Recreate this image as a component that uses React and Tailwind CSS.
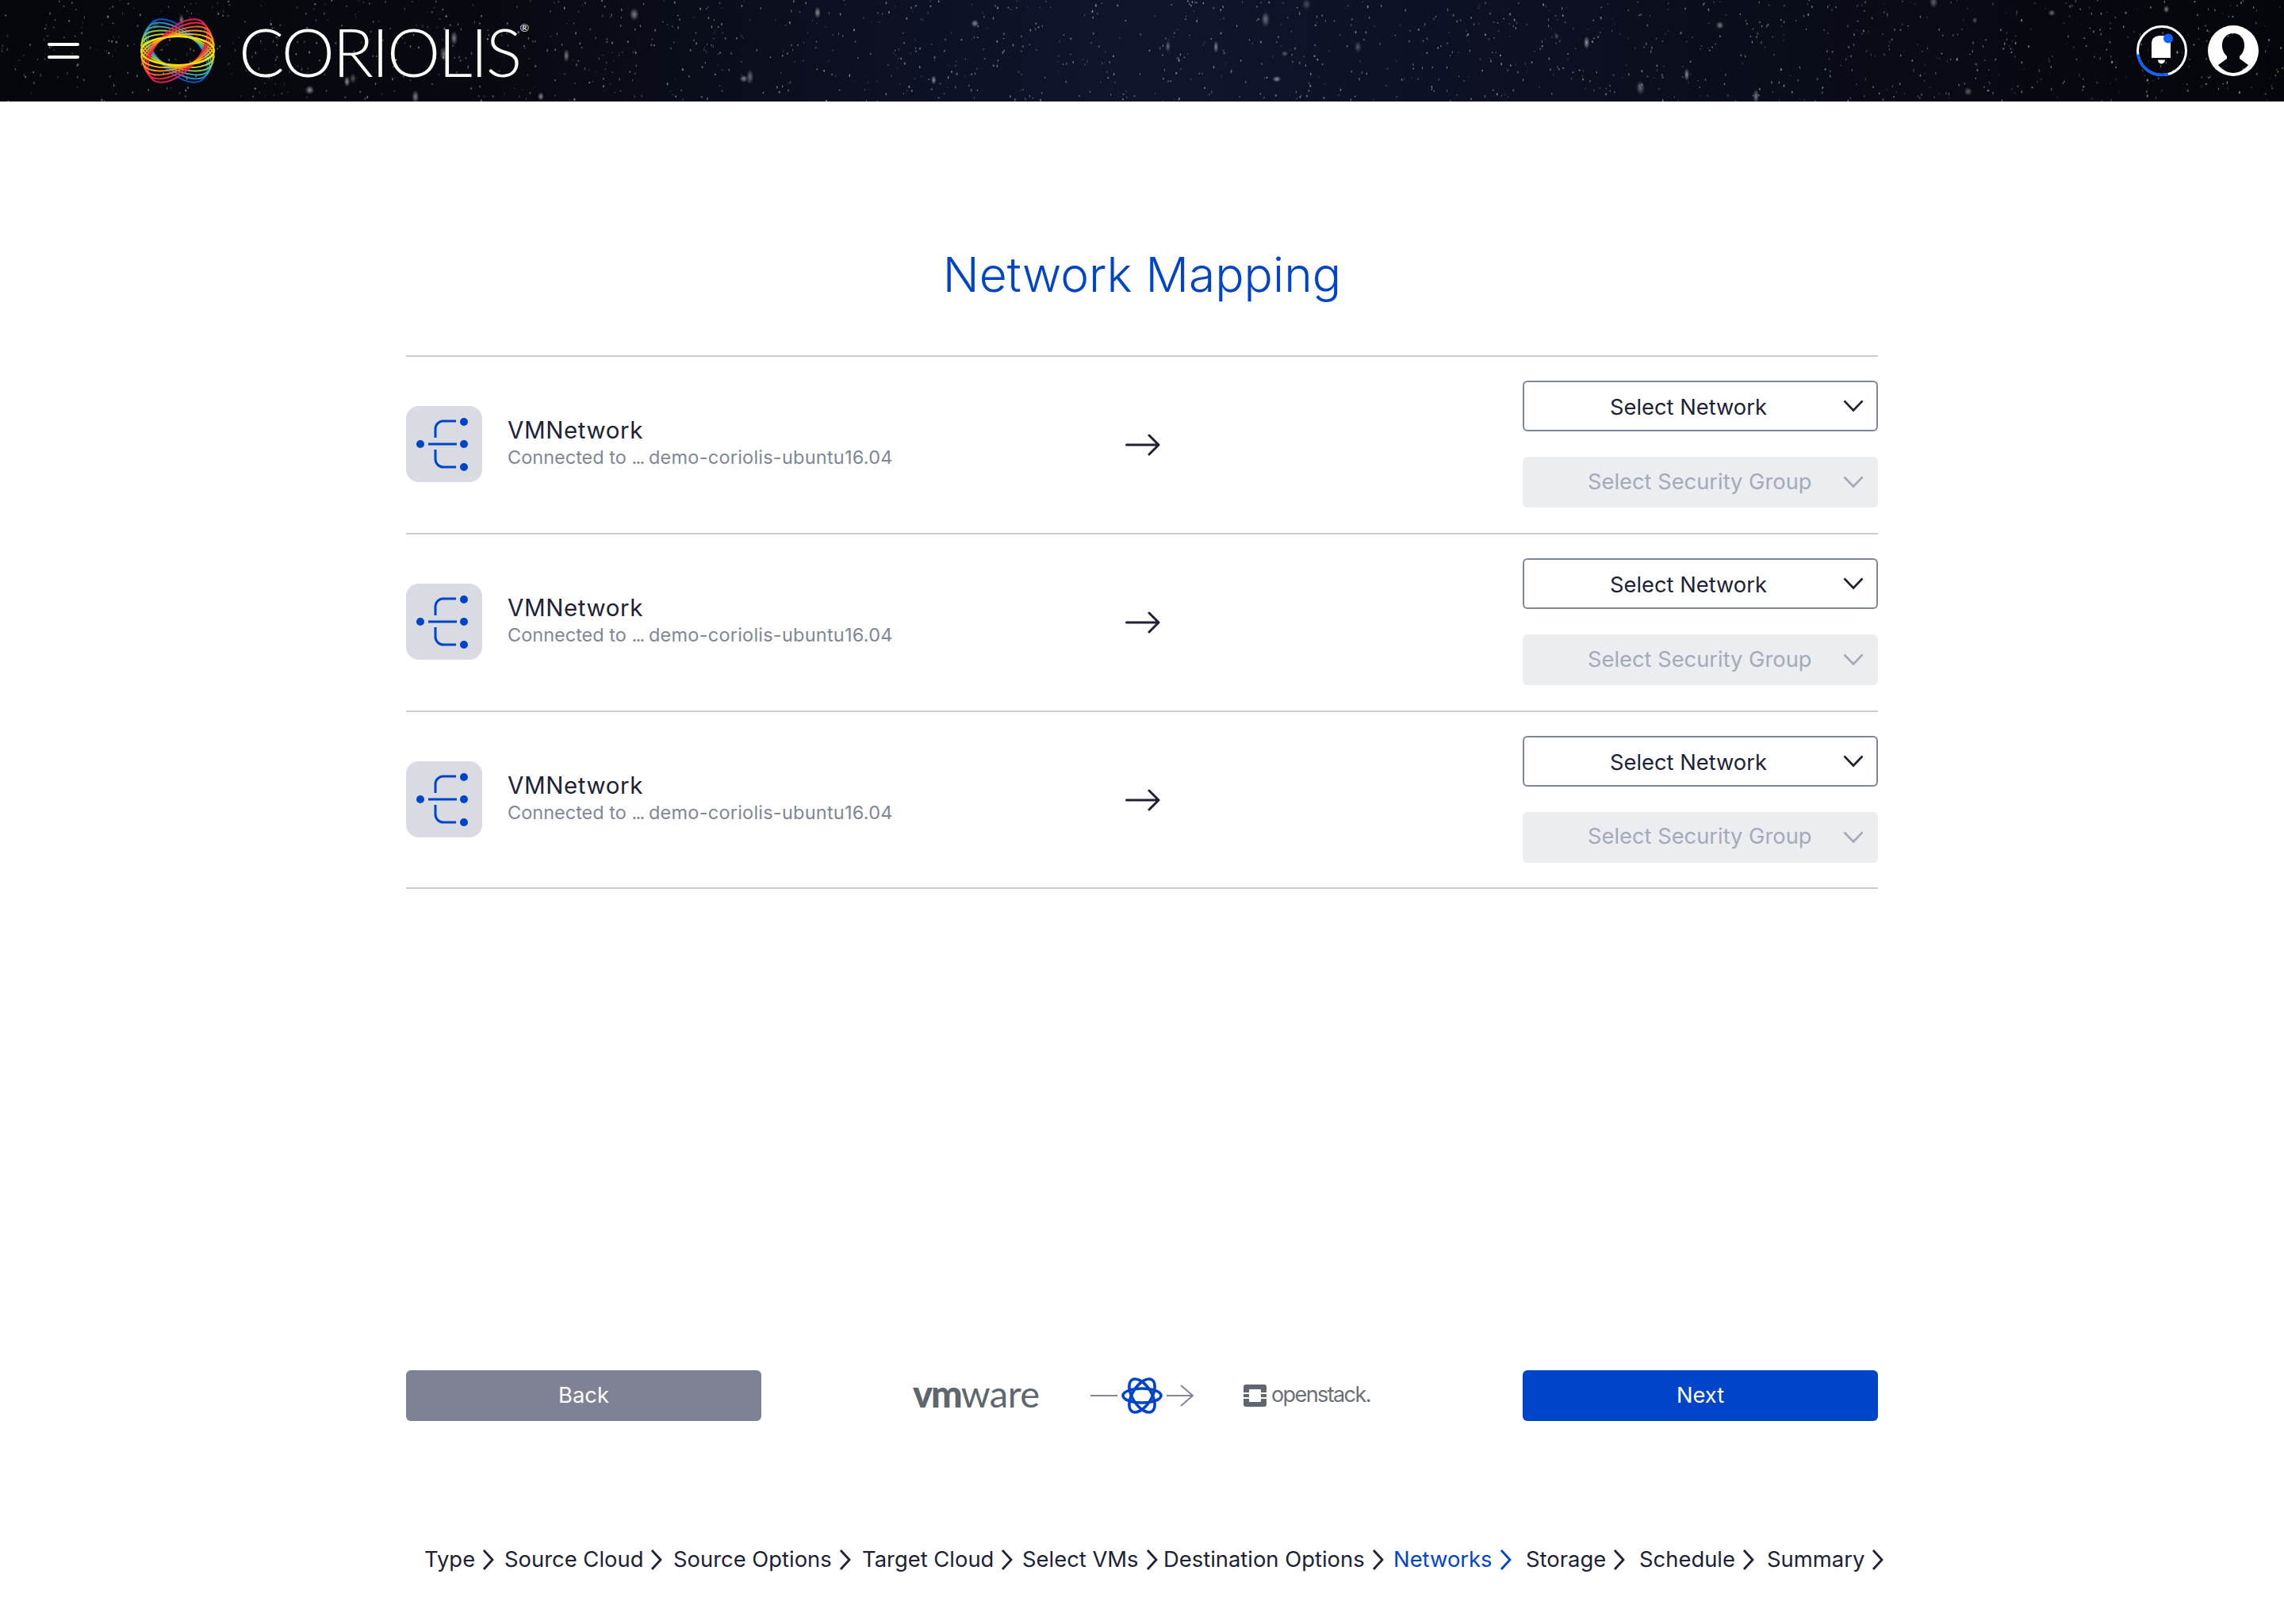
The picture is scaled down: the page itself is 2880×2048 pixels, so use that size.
import React from "react";

const FONT = "font-['Inter','Noto_Sans',sans-serif]";

function mulberry(seed) {
  let a = seed;
  return () => {
    a |= 0; a = (a + 0x6d2b79f5) | 0;
    let t = Math.imul(a ^ (a >>> 15), 1 | a);
    t = (t + Math.imul(t ^ (t >>> 7), 61 | t)) ^ t;
    return ((t ^ (t >>> 14)) >>> 0) / 4294967296;
  };
}
const rnd = mulberry(77);
const STARS = Array.from({ length: 1500 }, () => ({
  x: rnd() * 2880,
  y: rnd() * 128,
  rx: 0.5 + rnd() * 0.6,
  ry: 0.8 + rnd() * 1.1,
  o: 0.1 + rnd() * 0.4,
}));
const GLOWS = Array.from({ length: 34 }, () => ({
  x: rnd() * 2880,
  y: rnd() * 128,
  rx: 3 + rnd() * 3,
  ry: 4 + rnd() * 6,
  o: 0.3 + rnd() * 0.4,
}));

function Starfield() {
  return (
    <svg className="absolute inset-0 h-full w-full" viewBox="0 0 2880 128" preserveAspectRatio="none">
      <defs>
        <linearGradient id="sky" x1="0" x2="1" y1="0" y2="0">
          <stop offset="0" stopColor="#06070b" />
          <stop offset="0.22" stopColor="#080a12" />
          <stop offset="0.5" stopColor="#10152e" />
          <stop offset="0.78" stopColor="#0a0d1a" />
          <stop offset="1" stopColor="#05060a" />
        </linearGradient>
        <radialGradient id="glow">
          <stop offset="0" stopColor="#ffffff" stopOpacity="0.8" />
          <stop offset="1" stopColor="#ffffff" stopOpacity="0" />
        </radialGradient>
      </defs>
      <rect width="2880" height="128" fill="url(#sky)" />
      {STARS.map((s, i) => (
        <ellipse key={i} cx={s.x} cy={s.y} rx={s.rx} ry={s.ry} fill="#ffffff" opacity={s.o} />
      ))}
      {GLOWS.map((s, i) => (
        <ellipse key={i} cx={s.x} cy={s.y} rx={s.rx} ry={s.ry} fill="url(#glow)" opacity={s.o} />
      ))}
    </svg>
  );
}

const BLUES = ["#0b55d4", "#2a93c8", "#38b09c", "#8cc84b", "#c9d92e", "#f5dc0a"];
const REDS = ["#f0175f", "#f5253f", "#f7602a", "#f9902a", "#fdb813", "#ffe000"];

function Logo() {
  const sets = [
    { colors: BLUES, sign: 1 },
    { colors: REDS, sign: -1 },
  ];
  return (
    <svg width="100" height="92" viewBox="-50 -46 100 92" className="shrink-0">
      {sets.map((set) =>
        set.colors.map((c, i) => (
          <ellipse
            key={c + set.sign}
            rx={48 - i * 0.4}
            ry={26 - i * 1.6}
            fill="none"
            stroke={c}
            strokeWidth="1.9"
            transform={`rotate(${set.sign * (48 - i * 9.4)})`}
          />
        ))
      )}
    </svg>
  );
}

function Bell() {
  return (
    <svg width="66" height="66" viewBox="0 0 66 66">
      <circle cx="33" cy="33" r="30.5" fill="none" stroke="#fff" strokeWidth="3" />
      <path d="M2.8 37.5 A30.5 30.5 0 0 0 41 62.4" fill="none" stroke="#0f62fe" strokeWidth="3.5" />
      <path d="M20 42 V24 C20 16 26 14 32 14 C38 14 44 16 44 24 V42 Z" fill="#fff" />
      <path d="M28 44.5 H37 A4.5 5 0 0 1 28 44.5 Z" fill="#fff" />
      <circle cx="41" cy="17.5" r="6" fill="#0f62fe" />
    </svg>
  );
}

function User() {
  return (
    <svg width="64" height="64" viewBox="0 0 64 64">
      <path
        fillRule="evenodd"
        fill="#fff"
        d="M32 0 A32 32 0 1 1 32 64 A32 32 0 1 1 32 0 Z M32 10 C24 10 18 16 18 25 C18 31 20 35 24 39 L24 42 L13 50 C18 56 25 60 32 60 C39 60 46 56 51 50 L40 42 L40 39 C44 35 46 31 46 25 C46 16 40 10 32 10 Z"
      />
    </svg>
  );
}

function Chevron({ color }) {
  return (
    <svg width="26" height="16" viewBox="0 0 26 16" className="shrink-0">
      <path d="M1.5 1.5 L13 13.5 L24.5 1.5" fill="none" stroke={color} strokeWidth="2.6" />
    </svg>
  );
}

function NetIcon() {
  return (
    <div className="flex h-[96px] w-[96px] shrink-0 items-center justify-center rounded-2xl bg-[#d8dbe2]">
      <svg width="96" height="96" viewBox="0 0 96 96">
        <g fill="#0044ca">
          <circle cx="18" cy="48" r="5" />
          <circle cx="73" cy="48" r="5" />
          <circle cx="73" cy="20" r="5" />
          <circle cx="73" cy="77" r="5" />
        </g>
        <path
          d="M28 48 H64 M37 40 V29 A10 10 0 0 1 47 19 H63 M37 55 V67 A10 10 0 0 0 47 77 H63"
          fill="none"
          stroke="#0044ca"
          strokeWidth="3"
        />
      </svg>
    </div>
  );
}

function Row({ last }) {
  return (
    <div className={`grid ${last ? "h-[223px]" : "h-[224px]"} grid-cols-[1fr_48px_1fr] items-center border-b-2 border-[#c8ccd7]`}>
      <div className="mb-[2px] flex items-center">
        <NetIcon />
        <div className="mb-[5px] ml-8 flex flex-col">
          <div className="text-[29.5px] leading-[38px] tracking-[0.6px] text-[#202134]">VMNetwork</div>
          <div className="mt-[1px] whitespace-nowrap text-[23.5px] leading-[30px] text-[#7f8795]">
            Connected to <span className="tracking-[-1.8px]">...</span> <span className="tracking-[0.23px]">demo-coriolis-ubuntu16.04</span>
          </div>
        </div>
      </div>
      <svg width="46" height="28" viewBox="0 0 46 28" className="justify-self-center">
        <path d="M3.5 14 H44 M32 2 L44 14 L32 26" fill="none" stroke="#202134" strokeWidth="3" strokeLinecap="round" strokeLinejoin="round" />
      </svg>
      <div className="mb-[2px] flex flex-col items-end gap-8">
        <div className="flex h-[64px] w-[448px] items-center rounded-[6px] border-2 border-[#7f8795] bg-white">
          <span className="ml-[108px] whitespace-nowrap pt-[5px] text-[27.3px] text-[#202134]">Select Network</span>
          <span className="ml-auto mr-[16px] flex"><Chevron color="#202134" /></span>
        </div>
        <div className="flex h-[64px] w-[448px] items-center rounded-[6px] bg-[#ecedf1]">
          <span className="ml-[82px] whitespace-nowrap text-[27.3px] text-[#a4aab8]">Select Security Group</span>
          <span className="ml-auto mr-[18px] flex"><Chevron color="#a4aab8" /></span>
        </div>
      </div>
    </div>
  );
}

const CRUMBS = [
  ["Type", 535],
  ["Source Cloud", 636],
  ["Source Options", 849],
  ["Target Cloud", 1087],
  ["Select VMs", 1289],
  ["Destination Options", 1467],
  ["Networks", 1757],
  ["Storage", 1924],
  ["Schedule", 2067],
  ["Summary", 2228],
];

function Crumb({ label, active, next }) {
  const color = active ? "#0044ca" : "#202134";
  return (
    <div className="flex shrink-0 items-center" style={{ width: next }}>
      <span className="whitespace-nowrap text-[27.4px]" style={{ color }}>{label}</span>
      <svg width="16" height="28" viewBox="0 0 16 28" className="ml-[9px] shrink-0">
        <path d="M2 2 L13 14 L2 26" fill="none" stroke={color} strokeWidth="2.8" />
      </svg>
    </div>
  );
}

function Atom() {
  return (
    <svg width="52" height="48" viewBox="-26 -24 52 48">
      <g fill="none" stroke="#0044ca" strokeWidth="3.6">
        <ellipse rx="24" ry="9" />
        <ellipse rx="23.5" ry="12" transform="rotate(58)" />
        <ellipse rx="23.5" ry="12" transform="rotate(-58)" />
      </g>
    </svg>
  );
}

export default function App() {
  return (
    <div className={`flex h-[2048px] w-[2880px] flex-col bg-white ${FONT}`}>
      <header className="relative flex h-[128px] shrink-0 items-center overflow-hidden pl-[60px] pr-[32px]">
        <Starfield />
        <div className="relative flex flex-col gap-[12px]">
          <div className="h-[4px] w-[40px] rounded-full bg-white" />
          <div className="h-[4px] w-[40px] rounded-full bg-white" />
        </div>
        <div className="relative ml-[74px] flex"><Logo /></div>
        <div className="relative ml-[27px] flex items-start font-['Lato',sans-serif] text-white">
          <span className="text-[85px] font-light leading-[85px] tracking-[-2.6px]">CORIOLIS</span>
          <span className="mt-[6px] text-[14px] leading-none">®</span>
        </div>
        <div className="relative ml-auto flex items-center gap-[25px]">
          <Bell />
          <User />
        </div>
      </header>

      <main className="flex flex-1 flex-col px-[512px]">
        <div className="flex h-[322px] shrink-0 items-end justify-center border-b-2 border-[#c8ccd7] pb-[56px]">
          <h1 className="text-[60.5px] font-light text-[#0044ca]">Network Mapping</h1>
        </div>
        <Row />
        <Row />
        <Row last />

        <div className="mt-[607px] grid h-[64px] shrink-0 grid-cols-[448px_1fr_448px] items-center">
          <div className="flex h-[64px] items-center justify-center rounded-[6px] bg-[#7f8294] text-[27.3px] text-white">Back</div>
          <div className="flex h-full items-center">
            <div className="mb-[5px] ml-[191px] flex w-[162px] items-baseline font-['Lato',sans-serif] text-[#5f6670]">
              <span className="text-[47px] font-black leading-none tracking-[-2px]">vm</span>
              <span className="text-[47px] font-normal leading-none tracking-[-0.5px]">ware</span>
            </div>
            <svg width="34" height="4" viewBox="0 0 34 4" className="ml-[62px]"><path d="M0 2 H34" stroke="#7f8795" strokeWidth="2" /></svg>
            <span className="ml-[5px] flex"><Atom /></span>
            <svg width="34" height="28" viewBox="0 0 34 28" className="ml-[5px]"><path d="M0 14 H33 M18 1 L33 14 L18 27" fill="none" stroke="#7f8795" strokeWidth="2" /></svg>
            <svg width="29" height="28" viewBox="0 0 29 28" className="ml-[63px] shrink-0">
              <path fillRule="evenodd" fill="#5f6670" d="M3 0 H26 A3 3 0 0 1 29 3 V10 H22 V7 A1 1 0 0 0 21 6 H8 A1 1 0 0 0 7 7 V10 H0 V3 A3 3 0 0 1 3 0 Z M0 12 H7 V16 H0 Z M22 12 H29 V16 H22 Z M0 18 H7 V21 A1 1 0 0 0 8 22 H21 A1 1 0 0 0 22 21 V18 H29 V25 A3 3 0 0 1 26 28 H3 A3 3 0 0 1 0 25 Z" />
            </svg>
            <span className="mb-[2px] ml-[6px] text-[27px] tracking-[-1.6px] text-[#6b7078]">openstack.</span>
          </div>
          <div className="flex h-[64px] items-center justify-center rounded-[6px] bg-[#0044ca] text-[27.3px] text-white">Next</div>
        </div>
      </main>

      <nav className="mb-[62px] flex h-[38px] shrink-0 items-center pl-[535px]">
        {CRUMBS.map(([label, x], i) => (
          <Crumb
            key={label}
            label={label}
            active={label === "Networks"}
            next={i < CRUMBS.length - 1 ? CRUMBS[i + 1][1] - x : undefined}
          />
        ))}
      </nav>
    </div>
  );
}
